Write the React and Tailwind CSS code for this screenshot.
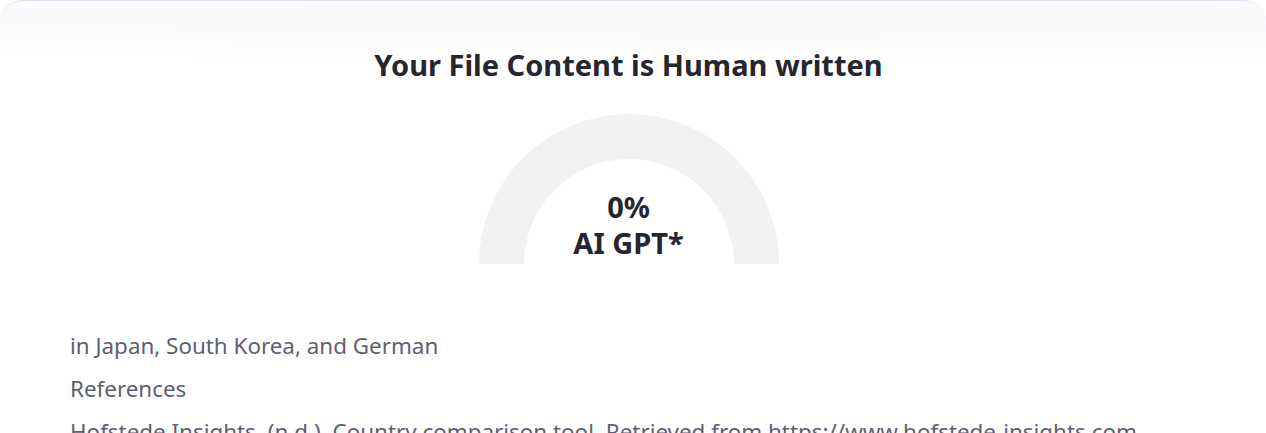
export default function App() {
  return (
    <div className="min-h-[433px] bg-white font-['Segoe_UI','Noto_Sans',sans-serif]">
      {/* ===== Result card ===== */}
      <div className="h-[433px] overflow-hidden rounded-t-[22px] border-t border-[#e3e4f3] bg-[radial-gradient(ellipse_120%_60px_at_60%_0px,#f8f8fa_0%,#fbfbfd_60%,#ffffff_100%)] pr-[9px]">
        <h2 className="pt-[44px] text-center text-[29px] leading-[40px] font-bold text-[#262630]">
          Your File Content is Human written
        </h2>

        {/* Gauge */}
        <div className="mt-[29px] flex justify-center">
          <div className="flex h-[150px] w-[300px] items-end justify-center rounded-t-full bg-[#f1f1f1]">
            <div className="flex h-[105px] w-[210px] flex-col items-center justify-end rounded-t-full bg-white pb-[3px] text-[29px] leading-[36px] font-bold text-[#262630]">
              <span>0%</span>
              <span>AI GPT*</span>
            </div>
          </div>
        </div>

        {/* Content preview */}
        <div className="mt-[67px] space-y-[13px] pl-[70px] text-[22.4px] leading-[30px] text-[#5e6072]">
          <p>in Japan, South Korea, and German</p>
          <p>References</p>
          <p className="whitespace-nowrap">
            Hofstede Insights. (n.d.). Country comparison tool. Retrieved from https://www.hofstede-insights.com
          </p>
        </div>
      </div>
    </div>
  );
}
